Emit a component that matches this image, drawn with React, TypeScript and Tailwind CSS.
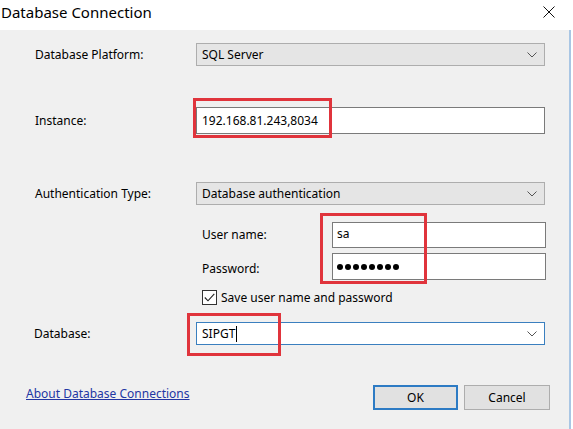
import React from 'react';

const font = { fontFamily: '"Noto Sans", "Open Sans", Arial, sans-serif' };

function Chevron() {
  return (
    <svg width="10" height="6" viewBox="0 0 10 6" className="shrink-0">
      <path d="M0.5 0.5 L5 5 L9.5 0.5" fill="none" stroke="#555" strokeWidth="1" />
    </svg>
  );
}

function Select({ value }: { value: string }) {
  return (
    <div className="flex h-[23px] w-[349px] items-center justify-between border border-[#adadad] bg-[#e5e5e5] pl-[5px] pr-[7px] text-[12px] text-black">
      <span>{value}</span>
      <Chevron />
    </div>
  );
}

export default function App() {
  return (
    <div className="relative h-[429px] w-[573px] overflow-hidden bg-white" style={font}>
      {/* title bar */}
      <div className="flex h-[30px] items-center justify-between bg-white pb-[6px] pr-[18px]">
        <span className="pl-[1px] text-[15px] text-black">Database Connection</span>
        <svg width="12" height="12" viewBox="0 0 12 12">
          <path d="M0.5 0.5 L11.5 11.5 M11.5 0.5 L0.5 11.5" stroke="#111" strokeWidth="1" />
        </svg>
      </div>

      <div className="flex h-[399px]">
        <div className="flex w-[569px] flex-col bg-[#f0f0f0] pl-[35px] pt-[13px] text-[12px] text-black">
          {/* platform */}
          <div className="flex items-center">
            <span className="w-[161px]">Database Platform:</span>
            <Select value="SQL Server" />
          </div>

          {/* instance */}
          <div className="mt-[41px] flex items-center">
            <span className="w-[161px]">Instance:</span>
            <div className="flex h-[27px] w-[349px] items-center border border-[#7a7a7a] bg-white pl-[5px]">
              192.168.81.243,8034
            </div>
          </div>

          {/* auth */}
          <div className="mt-[48px] flex items-center">
            <span className="w-[161px]">Authentication Type:</span>
            <Select value="Database authentication" />
          </div>

          <div className="ml-[167px] mt-[17px] flex items-center">
            <span className="w-[130px]">User name:</span>
            <div className="flex h-[26px] w-[214px] items-center border border-[#7a7a7a] bg-white pl-[4px] pb-[2px]">
              sa
            </div>
          </div>
          <div className="ml-[167px] mt-[5px] flex items-center">
            <span className="w-[130px] pt-[4px]">Password:</span>
            <div className="flex h-[27px] w-[214px] items-center gap-[2px] border border-[#7a7a7a] bg-white pl-[4px]">
              {Array.from({ length: 8 }).map((_, i) => (
                <span key={i} className="h-[6px] w-[6px] rounded-full bg-black" />
              ))}
            </div>
          </div>

          <div className="ml-[167px] mt-[10px] flex h-[15px] items-center gap-[4px] leading-[15px]">
            <span className="flex h-[15px] w-[15px] items-center justify-center border border-[#333] bg-white">
              <svg width="11" height="9" viewBox="0 0 11 9">
                <path d="M0.8 4.5 L4 7.8 L10.3 0.8" fill="none" stroke="#222" strokeWidth="1.1" />
              </svg>
            </span>
            <span>Save user name and password</span>
          </div>

          {/* database */}
          <div className="mt-[17px] flex items-center">
            <span className="-ml-[1px] w-[162px]">Database:</span>
            <div className="flex h-[23px] w-[349px] items-center justify-between border border-[#3a7fbf] bg-white pl-[5px] pr-[7px]">
              <span className="flex items-center">
                SIPGT<span className="ml-[1px] h-[16px] border-l border-black" />
              </span>
              <Chevron />
            </div>
          </div>

          {/* footer */}
          <div className="mt-[40px] flex items-center pr-[19px]">
            <span className="-ml-[9px] mb-[7px] flex-1 text-[12px] text-[#2336a3] underline">
              About Database Connections
            </span>
            <button className="flex h-[25px] w-[85px] items-center justify-center border-2 border-[#2d7bc4] bg-[#e1e1e1]">
              OK
            </button>
            <button className="ml-[6px] flex h-[25px] w-[86px] items-center justify-center border border-[#adadad] bg-[#e1e1e1]">
              Cancel
            </button>
          </div>
        </div>
        <div className="w-[2px] bg-[#a9c6e4]" />
        <div className="w-[2px] bg-white" />
      </div>

      {/* highlight boxes drawn over the form */}
      <div className="pointer-events-none absolute left-[193px] top-[98px] h-[40px] w-[139px] border-[3px] border-[#e0343c]" />
      <div className="pointer-events-none absolute left-[320px] top-[213px] h-[71px] w-[107px] border-[3px] border-[#e0343c]" />
      <div className="pointer-events-none absolute left-[187px] top-[313px] h-[43px] w-[94px] border-[3px] border-[#e0343c]" />
    </div>
  );
}
